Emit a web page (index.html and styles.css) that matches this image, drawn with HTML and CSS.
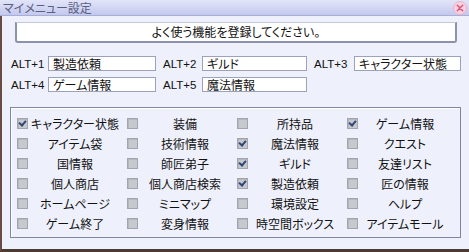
FILE: index.html
```html
<!DOCTYPE html>
<html lang="ja">
<head>
    <meta charset="UTF-8">
    <title>マイメニュー設定</title>
    <link rel="stylesheet" href="styles.css">
</head>
<body>
    <div class="window">
        <div class="titlebar">
            <span class="title">マイメニュー設定</span>
            <span class="close">
                <svg width="14" height="14" viewBox="0 0 14 14">
                    <circle cx="7" cy="7" r="6.5" fill="#f6d2e0" stroke="#e8b4c8" stroke-width="1"/>
                    <path d="M4.3 4.3 L9.7 9.7 M9.7 4.3 L4.3 9.7" stroke="#e0507a" stroke-width="1.4" stroke-linecap="round"/>
                </svg>
            </span>
        </div>

        <div class="content">
            <div class="banner">よく使う機能を登録してください。</div>

            <div class="alt-row">
                <span class="alt first">ALT+1</span><span class="field w1">製造依頼</span>
                <span class="alt">ALT+2</span><span class="field w2">ギルド</span>
                <span class="alt">ALT+3</span><span class="field w3">キャラクター状態</span>
            </div>
            <div class="alt-row">
                <span class="alt first">ALT+4</span><span class="field w1">ゲーム情報</span>
                <span class="alt">ALT+5</span><span class="field w2">魔法情報</span>
            </div>

            <div class="panel">
                <div class="cell"><span class="box on"></span><span class="label">キャラクター状態</span></div>
                <div class="cell"><span class="box"></span><span class="label">装備</span></div>
                <div class="cell"><span class="box"></span><span class="label">所持品</span></div>
                <div class="cell"><span class="box on"></span><span class="label">ゲーム情報</span></div>

                <div class="cell"><span class="box"></span><span class="label">アイテム袋</span></div>
                <div class="cell"><span class="box"></span><span class="label">技術情報</span></div>
                <div class="cell"><span class="box on"></span><span class="label">魔法情報</span></div>
                <div class="cell"><span class="box"></span><span class="label">クエスト</span></div>

                <div class="cell"><span class="box"></span><span class="label">国情報</span></div>
                <div class="cell"><span class="box"></span><span class="label">師匠弟子</span></div>
                <div class="cell"><span class="box on"></span><span class="label">ギルド</span></div>
                <div class="cell"><span class="box"></span><span class="label">友達リスト</span></div>

                <div class="cell"><span class="box"></span><span class="label">個人商店</span></div>
                <div class="cell"><span class="box"></span><span class="label">個人商店検索</span></div>
                <div class="cell"><span class="box on"></span><span class="label">製造依頼</span></div>
                <div class="cell"><span class="box"></span><span class="label">匠の情報</span></div>

                <div class="cell"><span class="box"></span><span class="label">ホームページ</span></div>
                <div class="cell"><span class="box"></span><span class="label">ミニマップ</span></div>
                <div class="cell"><span class="box"></span><span class="label">環境設定</span></div>
                <div class="cell"><span class="box"></span><span class="label">ヘルプ</span></div>

                <div class="cell"><span class="box"></span><span class="label">ゲーム終了</span></div>
                <div class="cell"><span class="box"></span><span class="label">変身情報</span></div>
                <div class="cell"><span class="box"></span><span class="label">時空間ボックス</span></div>
                <div class="cell"><span class="box"></span><span class="label">アイテムモール</span></div>
            </div>
        </div>
    </div>
</body>
</html>
```

FILE: styles.css
```css
body {
    margin: 0;
    background: #eef0fb;
    font-family: "Noto Sans CJK JP", "Noto Sans", sans-serif;
    font-size: 12px;
    font-feature-settings: "palt";
    color: #111;
}
.window { width: 469px; height: 252px; overflow: hidden; display: flex; flex-direction: column; }
.titlebar {
    height: 15px;
    flex: none;
    display: flex;
    align-items: center;
    justify-content: space-between;
    padding: 0 2px 0 3px;
    background: linear-gradient(#e2e5f8, #c3c8ee);
    border-bottom: 1px solid #a8aed8;
}
.title { color: #5a5f7e; font-size: 12px; line-height: 15px; }
.close { display: flex; margin-top: 1px; }
.content {
    flex: 1;
    background: #eef0fb;
    border-left: 2px solid #6a4c44;
    border-bottom: 3px solid #4c3a34;
    padding: 6px 0 0 8px;
}
.banner {
    margin: 0 0 13px 5px;
    width: 438px;
    height: 18px;
    line-height: 18px;
    text-align: center;
    background: #fff;
    border: 1px solid #c4c8dc;
    border-left: 2px solid #8c92aa;
    border-right: 2px solid #8c92aa;
    border-bottom: 2px solid #8c92aa;
    border-radius: 0 0 3px 3px;
}
.alt-row { display: flex; align-items: center; height: 15px; margin-left: 1px; }
.alt-row + .alt-row { margin-top: 6px; }
.alt {
    font-family: "Liberation Sans", Arial, sans-serif;
    font-size: 11.5px;
    color: #111;
    width: 46px;
    padding-left: 7px;
    box-sizing: border-box;
}
.alt.first { width: 37px; padding-left: 0; }
.field {
    height: 15px;
    line-height: 14px;
    box-sizing: border-box;
    background: #fff;
    border: 1px solid #9ca2bc;
    padding-left: 4px;
}
.w1 { width: 108px; }
.w2 { width: 105px; }
.w3 { width: 107px; margin-left: 1px; }
.panel {
    margin-top: 15px;
    width: 451px;
    height: 131px;
    box-sizing: border-box;
    border: 1px solid #7e879f;
    box-shadow: inset 1px 1px 0 #fff;
    padding: 5px 0 0 6px;
    display: grid;
    grid-template-columns: repeat(4, 110px);
    grid-auto-rows: 20px;
}
.cell { display: flex; align-items: center; }
.box {
    width: 11px;
    height: 11px;
    flex: none;
    box-sizing: border-box;
    background: #c6cacf;
    border: 1px solid #a2a6ac;
    box-shadow: inset 1px 1px 0 #b4b8be;
    position: relative;
}
.box.on::after {
    content: "";
    position: absolute;
    left: 2px;
    top: 0;
    width: 3px;
    height: 5px;
    border: solid #2f4676;
    border-width: 0 2px 2px 0;
    transform: rotate(40deg);
}
.label { flex: 1; text-align: center; margin-right: 5px; white-space: nowrap; }
```
